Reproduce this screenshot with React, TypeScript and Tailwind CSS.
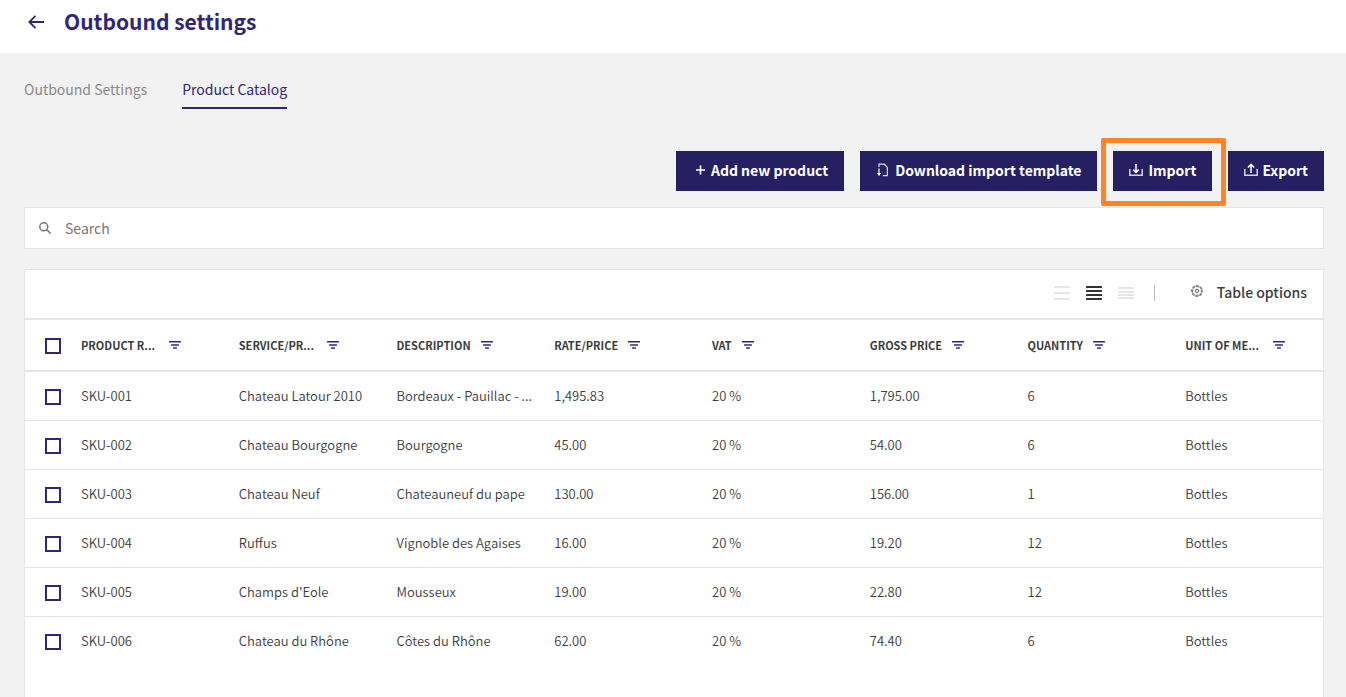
import React, { useState } from 'react';

interface Product {
  sku: string;
  name: string;
  description: string;
  rate: string;
  vat: string;
  gross: string;
  quantity: number;
  unit: string;
}

const columns = ['Product R...', 'Service/Pr...', 'Description', 'Rate/Price', 'VAT', 'Gross price', 'Quantity', 'Unit of me...'];

const products: Product[] = [
  { sku: 'SKU-001', name: 'Chateau Latour 2010', description: 'Bordeaux - Pauillac - ...', rate: '1,495.83', vat: '20 %', gross: '1,795.00', quantity: 6, unit: 'Bottles' },
  { sku: 'SKU-002', name: 'Chateau Bourgogne', description: 'Bourgogne', rate: '45.00', vat: '20 %', gross: '54.00', quantity: 6, unit: 'Bottles' },
  { sku: 'SKU-003', name: 'Chateau Neuf', description: 'Chateauneuf du pape', rate: '130.00', vat: '20 %', gross: '156.00', quantity: 1, unit: 'Bottles' },
  { sku: 'SKU-004', name: 'Ruffus', description: 'Vignoble des Agaises', rate: '16.00', vat: '20 %', gross: '19.20', quantity: 12, unit: 'Bottles' },
  { sku: 'SKU-005', name: "Champs d'Eole", description: 'Mousseux', rate: '19.00', vat: '20 %', gross: '22.80', quantity: 12, unit: 'Bottles' },
  { sku: 'SKU-006', name: 'Chateau du Rhône', description: 'Côtes du Rhône', rate: '62.00', vat: '20 %', gross: '74.40', quantity: 6, unit: 'Bottles' },
];

const FilterIcon = () => (
  <svg width="12" height="8" viewBox="0 0 12 8" fill="#2f2678">
    <rect x="0" y="0" width="12" height="1.6" rx="0.5" />
    <rect x="2" y="3.2" width="8" height="1.6" rx="0.5" />
    <rect x="4" y="6.2" width="4" height="1.6" rx="0.5" />
  </svg>
);

const PlusIcon = () => (
  <svg width="10" height="10" viewBox="0 0 10 10" fill="none" stroke="white" strokeWidth="1.6">
    <path d="M4.5 0.5v9M0 5h9" />
  </svg>
);

const TemplateIcon = () => (
  <svg width="12" height="14" viewBox="0 0 12 14" fill="none" stroke="white" strokeWidth="1.2">
    <path d="M3 4V1.2H8.2L11.3 4.2V12.6H6.8" opacity="0.85" />
    <path d="M3 5.5V12" />
    <path d="M0.8 10L3 12.9L5.2 10Z" fill="white" stroke="none" />
  </svg>
);

const ImportIcon = () => (
  <svg width="14" height="14" viewBox="0 0 14 14" fill="none" stroke="white" strokeWidth="1.5">
    <path d="M0.8 6V12.2H13.2V6" opacity="0.8" />
    <path d="M7 1V9.3M4.2 6.6L7 9.4L9.8 6.6" />
  </svg>
);

const ExportIcon = () => (
  <svg width="14" height="14" viewBox="0 0 14 14" fill="none" stroke="white" strokeWidth="1.5">
    <path d="M0.8 6V12.2H13.2V6" opacity="0.8" />
    <path d="M7 10V1.5M3.9 4.6L7 1.4L10.1 4.6" />
  </svg>
);

const DensityIcon = ({ lines, color }: { lines: number[]; color: string }) => (
  <svg width="16" height="14" viewBox="0 0 16 14" fill={color}>
    {lines.map((y) => (
      <rect key={y} x="0" y={y} width="16" height="2" rx="0.5" />
    ))}
  </svg>
);

const GearIcon = () => (
  <svg width="12" height="12" viewBox="0 0 12 12" fill="none" stroke="#808080">
    <circle cx="6" cy="6" r="5.3" strokeWidth="1.4" strokeDasharray="2.9 1.26" strokeDashoffset="1.45" />
    <circle cx="6" cy="6" r="4.6" strokeWidth="0.9" />
    <circle cx="6" cy="6" r="1.6" strokeWidth="1.1" />
    <path d="M6 2V3.6M6 8.4V10M2 6H3.6M8.4 6H10" strokeWidth="0.5" />
  </svg>
);

const Checkbox = ({ label, checked, onChange }: { label: string; checked: boolean; onChange: () => void }) => (
  <input
    type="checkbox"
    aria-label={label}
    checked={checked}
    onChange={onChange}
    className="block w-4 h-4 ml-5 mt-0.5 appearance-none border-2 border-[#2f2678] bg-white checked:bg-[#2f2678]"
  />
);

const buttonClass = 'flex items-center h-10 px-4 pb-0.5 bg-[#262063] text-white text-sm font-bold hover:bg-[#2f2678]';

export default function App() {
  const [search, setSearch] = useState('');
  const [density, setDensity] = useState('normal');
  const [selected, setSelected] = useState<string[]>([]);

  const toggle = (sku: string) => {
    setSelected(selected.includes(sku) ? selected.filter((s) => s !== sku) : [...selected, sku]);
  };

  const toggleAll = () => {
    setSelected(selected.length === products.length ? [] : products.map((p) => p.sku));
  };

  return (
    <div className="min-h-screen flex flex-col bg-[#f2f2f2] font-['Noto_Sans_CJK_SC',sans-serif] text-[#3c3c3c]">
      {/* Header */}
      <header className="flex items-center h-[53px] pl-7 pb-3 bg-white">
        <button aria-label="Back" className="mr-5 pt-0.5">
          <svg width="16" height="14" viewBox="0 0 16 14" fill="none" stroke="#2f2678" strokeWidth="1.8">
            <path d="M16 7H1.5M7.5 0.8L1.3 7L7.5 13.2" />
          </svg>
        </button>
        <h1 className="text-[21px] leading-8 font-bold text-[#2f2678]">Outbound settings</h1>
      </header>

      <main className="flex-1 flex flex-col pl-6 pr-[22px]">
        {/* Tabs */}
        <nav className="flex gap-[35px] pt-6 text-sm">
          <a href="#settings" className="h-8 leading-6 text-[#8a8a8a]">Outbound Settings</a>
          <a href="#catalog" className="h-8 leading-6 text-[#2f2678] border-b-2 border-[#2f2678]">Product Catalog</a>
        </nav>

        {/* Actions */}
        <div className="flex justify-end gap-4 mt-[42px]">
          <button className={`${buttonClass} gap-[5px] pl-5`}>
            <PlusIcon />
            Add new product
          </button>
          <button className={`${buttonClass} gap-[7px]`}>
            <TemplateIcon />
            Download import template
          </button>
          <div className="relative">
            <button className={`${buttonClass} gap-[5px]`}>
              <ImportIcon />
              Import
            </button>
            <div className="absolute -top-[13px] -bottom-[15px] -left-3 -right-[14px] border-5 border-[#ff8427] rounded-xs pointer-events-none" />
          </div>
          <button className={`${buttonClass} gap-1`}>
            <ExportIcon />
            Export
          </button>
        </div>

        {/* Search */}
        <label className="flex items-center h-[42px] mt-4 px-[14px] gap-[14px] bg-white border border-[#e5e5e5]">
          <svg width="12" height="12" viewBox="0 0 12 12" fill="none" stroke="#777" strokeWidth="1.5">
            <circle cx="4.8" cy="4.8" r="4" />
            <path d="M7.8 7.8L11.7 11.6" />
          </svg>
          <input
            type="text"
            aria-label="Search"
            placeholder="Search"
            value={search}
            onChange={(e) => setSearch(e.target.value)}
            className="flex-1 text-sm leading-6 outline-none placeholder:text-[#757575]"
          />
        </label>

        {/* Table */}
        <section className="flex-1 mt-5 bg-white border border-b-0 border-[#e5e5e5]">
          <div className="flex items-center justify-end h-12 pr-4 pb-1">
            <div className="flex gap-4 pt-0.5">
              <button aria-label="Comfortable rows" onClick={() => setDensity('large')}>
                <DensityIcon lines={[0, 6, 12]} color={density === 'large' ? '#333' : '#e5e5e5'} />
              </button>
              <button aria-label="Normal rows" onClick={() => setDensity('normal')}>
                <DensityIcon lines={[0, 4, 8, 12]} color={density === 'normal' ? '#333' : '#e5e5e5'} />
              </button>
              <button aria-label="Compact rows" onClick={() => setDensity('small')}>
                <DensityIcon lines={[1, 5, 8, 11]} color={density === 'small' ? '#333' : '#e5e5e5'} />
              </button>
            </div>
            <div className="w-px h-4 mt-0.5 ml-5 mr-9 bg-[#bbb]" />
            <button className="flex items-center gap-[14px] text-sm font-medium">
              <span className="pb-0.5">
                <GearIcon />
              </span>
              Table options
            </button>
          </div>

          <table className="w-full table-fixed text-left">
            <thead>
              <tr className="h-[52px] border-y-2 border-[#e5e5e5]">
                <th className="w-9">
                  <Checkbox label="Select all" checked={selected.length === products.length} onChange={toggleAll} />
                </th>
                {columns.map((column) => (
                  <th key={column} className="pl-5">
                    <div className="flex items-center gap-2.5">
                      <span className={`text-[11px] leading-4 font-bold uppercase whitespace-nowrap ${column.endsWith('...') ? 'w-[78px]' : ''}`}>
                        {column}
                      </span>
                      <button aria-label={`Filter ${column}`}>
                        <FilterIcon />
                      </button>
                    </div>
                  </th>
                ))}
              </tr>
            </thead>
            <tbody className="text-[13px] leading-5 font-[350]">
              {products.map((p) => (
                <tr key={p.sku} className="h-[49px] border-b border-[#e5e5e5] last:border-b-0">
                  <td>
                    <Checkbox label={`Select ${p.sku}`} checked={selected.includes(p.sku)} onChange={() => toggle(p.sku)} />
                  </td>
                  <td className="pl-5">{p.sku}</td>
                  <td className="pl-5 whitespace-nowrap">{p.name}</td>
                  <td className="pl-5 whitespace-nowrap">{p.description}</td>
                  <td className="pl-5">{p.rate}</td>
                  <td className="pl-5">{p.vat}</td>
                  <td className="pl-5">{p.gross}</td>
                  <td className="pl-5">{p.quantity}</td>
                  <td className="pl-5">{p.unit}</td>
                </tr>
              ))}
            </tbody>
          </table>
        </section>
      </main>
    </div>
  );
}
